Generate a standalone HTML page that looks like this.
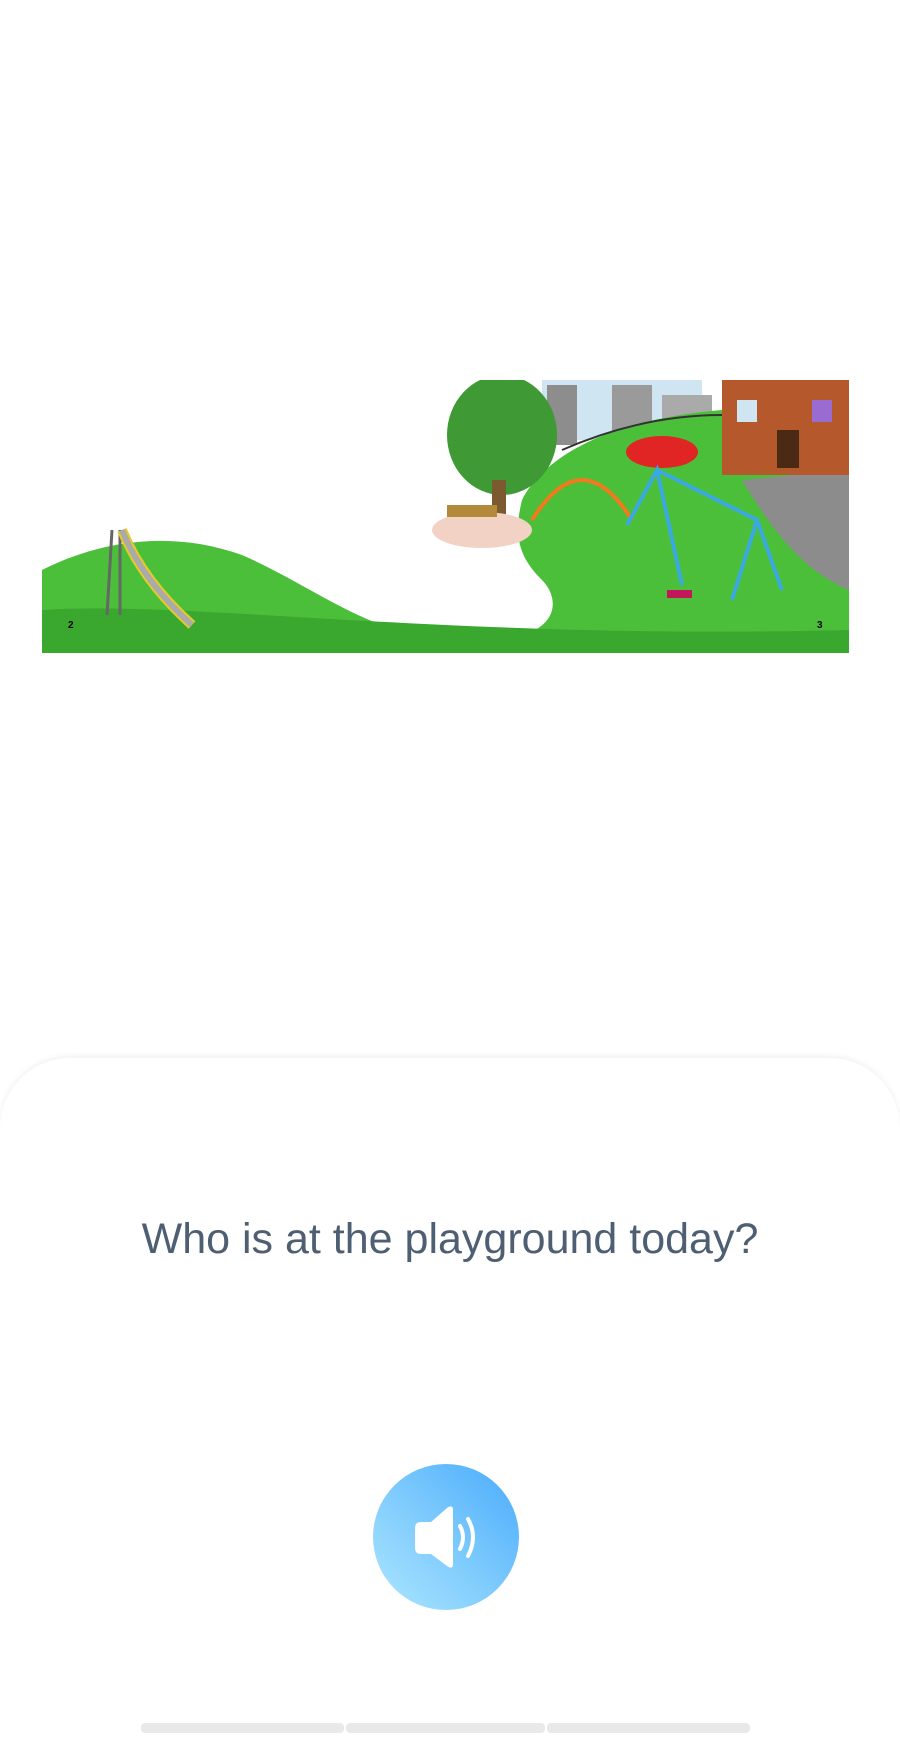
<!DOCTYPE html>
<html><head><meta charset="utf-8"><style>
html,body{margin:0;padding:0;width:900px;height:1731px;background:#fff;overflow:hidden;font-family:"Liberation Sans",Roboto,sans-serif;}
.card{position:absolute;left:0;top:1058px;width:900px;height:700px;background:#fff;border-radius:70px 70px 0 0;box-shadow:0 -2px 6px rgba(0,0,0,0.06);}
.q{position:absolute;left:0;width:900px;top:1215px;text-align:center;font-size:43px;color:#4f5f73;}
.btn{position:absolute;left:373px;top:1464px;width:146px;height:146px;border-radius:50%;background:linear-gradient(225deg,#4aabfb 0%,#7ccafd 50%,#ade6ff 100%);}
.bar{position:absolute;top:1723px;height:10px;background:#e9e9ec;border-radius:4px;}
</style></head><body>
<svg style="position:absolute;left:42px;top:380px" width="807" height="273" viewBox="0 0 807 273">
<rect width="807" height="273" fill="#fff"/>
<rect x="500" y="0" width="160" height="60" fill="#cfe6f2"/>
<rect x="505" y="5" width="30" height="60" fill="#8d8d8d"/>
<rect x="570" y="5" width="40" height="50" fill="#9a9a9a"/>
<rect x="620" y="15" width="50" height="40" fill="#aaa"/>
<path d="M0 190 C60 160 130 150 200 175 C280 210 330 260 430 262 C520 262 520 220 500 200 C480 180 470 160 480 120 C500 80 560 40 680 30 L807 30 L807 273 L0 273Z" fill="#4cbf3a"/>
<path d="M520 70 Q600 35 680 35" stroke="#333" stroke-width="2" fill="none"/>
<path d="M0 230 C150 220 400 260 807 250 L807 273 L0 273Z" fill="#3aa82f"/>
<path d="M700 100 L807 90 L807 210 C760 190 730 150 700 100Z" fill="#8c8c8c"/>
<rect x="680" y="0" width="127" height="95" fill="#b5582c"/>
<rect x="735" y="50" width="22" height="38" fill="#4a2a14"/>
<rect x="695" y="20" width="20" height="22" fill="#cfe6f2"/><rect x="770" y="20" width="20" height="22" fill="#9a6bd1"/>
<ellipse cx="620" cy="72" rx="36" ry="16" fill="#e12424"/>
<ellipse cx="460" cy="55" rx="55" ry="60" fill="#3f9a35"/>
<rect x="450" y="100" width="14" height="50" fill="#7a5a2e"/>
<ellipse cx="440" cy="150" rx="50" ry="18" fill="#f2d2c4"/>
<rect x="405" y="125" width="50" height="12" fill="#b38a3a"/>
<path d="M490 140 Q540 60 590 140" stroke="#f07a1c" stroke-width="4" fill="none"/>
<path d="M585 145 L615 90 L640 205 M615 90 L715 140 L690 220 M715 140 L740 210" stroke="#3aa9e0" stroke-width="4" fill="none"/>
<rect x="625" y="210" width="25" height="8" fill="#c2185b"/>
<path d="M65 235 L70 150 M78 235 L78 150" stroke="#666" stroke-width="3"/>
<path d="M80 150 Q100 200 150 245" stroke="#e7c928" stroke-width="10" fill="none"/>
<path d="M80 150 Q100 200 150 245" stroke="#aaa" stroke-width="6" fill="none"/>
<text x="26" y="248" font-size="10" font-weight="bold">2</text>
<text x="775" y="248" font-size="10" font-weight="bold">3</text>
</svg>
<div class="card"></div>
<div class="q">Who is at the playground today?</div>
<div class="btn"><svg width="146" height="146" viewBox="0 0 146 146">
<path d="M42 64 Q42 58 48 58 L58 58 L74 44 Q80 40 80 46 L80 100 Q80 106 74 102 L58 90 L48 90 Q42 90 42 84Z" fill="#fff"/>
<path d="M87 62 Q93 73 87 85" stroke="#fff" stroke-width="4" fill="none" stroke-linecap="round"/>
<path d="M95 55 Q105 73 95 92" stroke="#fff" stroke-width="4" fill="none" stroke-linecap="round"/>
</svg></div>
<div class="bar" style="left:141px;width:203px"></div>
<div class="bar" style="left:346px;width:199px"></div>
<div class="bar" style="left:547px;width:203px"></div>
</body></html>
